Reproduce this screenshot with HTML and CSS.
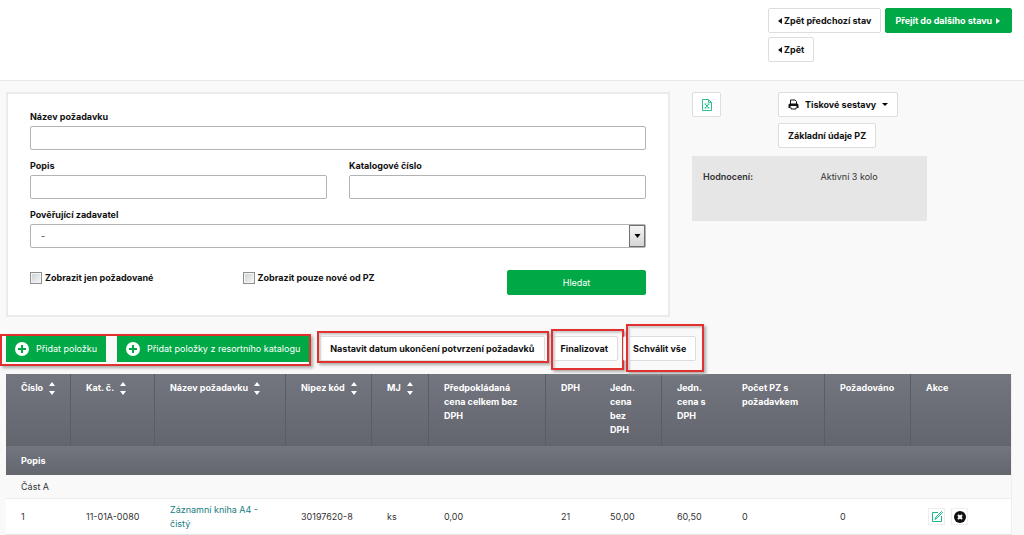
FILE: index.html
```html
<!DOCTYPE html>
<html lang="cs">
<head>
<meta charset="utf-8">
<title>Požadavky</title>
<link rel="stylesheet" href="styles.css">
</head>
<body>
<svg class="sprite" aria-hidden="true">
  <symbol id="sort" viewBox="0 0 6 13"><path d="M3 0 6 4H0zM0 9h6l-3 4z" fill="#fff"/></symbol>
  <symbol id="plus" viewBox="0 0 14 14"><circle cx="7" cy="7" r="7" fill="#fff"/><path d="M7 3v8M3 7h8" stroke="#00a846" stroke-width="2"/></symbol>
  <symbol id="left" viewBox="0 0 4 6"><path d="M4 0v6L0 3z" fill="currentColor"/></symbol>
  <symbol id="right" viewBox="0 0 4 6"><path d="M0 0v6l4-3z" fill="currentColor"/></symbol>
</svg>
<header class="topbar">
  <div class="topbar-actions">
    <button class="btn" type="button"><svg class="arrow"><use href="#left"/></svg>Zpět předchozí stav</button>
    <button class="btn btn-primary btn-next" type="button">Přejít do dalšího stavu<svg class="arrow"><use href="#right"/></svg></button>
    <button class="btn" type="button"><svg class="arrow"><use href="#left"/></svg>Zpět</button>
  </div>
</header>
<main>
  <div class="overview">
    <form class="filter">
      <div class="field wide"><label for="name">Název požadavku</label><input class="control" id="name" type="text"></div>
      <div class="field"><label for="desc">Popis</label><input class="control" id="desc" type="text"></div>
      <div class="field"><label for="catalog">Katalogové číslo</label><input class="control" id="catalog" type="text"></div>
      <div class="field wide"><label for="owner">Pověřující zadavatel</label>
        <div class="select-wrap"><select class="control" id="owner"><option>-</option></select><span class="select-button"><svg viewBox="0 0 6 4"><path d="M0 0h6L3 4z"/></svg></span></div>
      </div>
      <div class="filter-footer wide">
        <label class="check"><input type="checkbox">Zobrazit jen požadované</label>
        <label class="check"><input type="checkbox">Zobrazit pouze nové od PZ</label>
        <button class="btn btn-primary btn-search" type="submit">Hledat</button>
      </div>
    </form>
    <aside class="side">
      <div class="side-tools">
        <button class="btn btn-icon" type="button" aria-label="Export do Excelu">
          <svg width="12" height="12" viewBox="0 0 12 12" fill="none" stroke="#2fbd93"><path d="M1.500.5h6l3 3v8h-9z"/><path d="M7.500.5v3h3M4 5l4 4M8 5 4 9M3.500 5h2M6.500 5h2M3.500 9h2M6.500 9h2"/></svg>
        </button>
        <div class="side-buttons">
          <button class="btn btn-print" type="button">
            <svg width="11" height="11" viewBox="0 0 11 11"><path d="M2.500 5V1h4.500l1.500 1.500V5M3 8.500v1.500h5V8.500" fill="none" stroke="#111"/><path d="M2 4.500h7a1.500 1.500 0 0 1 1.500 1.500v3H8.500V7h-6v2h-2V6A1.500 1.500 0 0 1 2 4.500z" fill="#111"/></svg>
            Tiskové sestavy
            <svg width="6" height="3" viewBox="0 0 6 3"><path d="M0 0h6L3 3z"/></svg>
          </button>
          <button class="btn" type="button">Základní údaje PZ</button>
        </div>
      </div>
      <dl class="info"><dt>Hodnocení:</dt><dd>Aktivní 3 kolo</dd></dl>
    </aside>
  </div>
  <div class="toolbar">
    <div class="marked mark-add">
      <button class="btn btn-primary btn-add" type="button"><svg><use href="#plus"/></svg>Přidat položku</button>
      <button class="btn btn-primary btn-add" type="button"><svg><use href="#plus"/></svg>Přidat položky z resortního katalogu</button>
    </div>
    <div class="marked mark-date"><button class="btn" type="button">Nastavit datum ukončení potvrzení požadavků</button></div>
    <div class="marked mark-final"><button class="btn" type="button">Finalizovat</button></div>
    <div class="marked mark-approve"><button class="btn" type="button">Schválit vše</button></div>
  </div>
  <table class="items">
    <colgroup><col class="c-num"><col class="c-cat"><col class="c-name"><col class="c-nipez"><col class="c-unit"><col class="c-total"><col class="c-vat"><col class="c-net"><col class="c-gross"><col class="c-count"><col class="c-req"><col class="c-act"></colgroup>
    <thead>
      <tr>
        <th>Číslo<svg class="sort"><use href="#sort"/></svg></th>
        <th>Kat. č.<svg class="sort"><use href="#sort"/></svg></th>
        <th>Název požadavku<svg class="sort"><use href="#sort"/></svg></th>
        <th>Nipez kód<svg class="sort"><use href="#sort"/></svg></th>
        <th>MJ<svg class="sort"><use href="#sort"/></svg></th>
        <th>Předpokládaná cena celkem bez DPH</th>
        <th class="open">DPH</th>
        <th>Jedn.<br>cena<br>bez<br>DPH</th>
        <th class="open">Jedn.<br>cena s<br>DPH</th>
        <th>Počet PZ s požadavkem</th>
        <th>Požadováno</th>
        <th>Akce</th>
      </tr>
      <tr class="subhead"><th colspan="12">Popis</th></tr>
    </thead>
    <tbody>
      <tr class="group"><td colspan="12">Část A</td></tr>
      <tr class="item">
        <td>1</td><td>11-01A-0080</td><td><a href="#">Záznamní kniha A4 - čistý</a></td><td>30197620-8</td><td>ks</td><td>0,00</td><td>21</td><td>50,00</td><td>60,50</td><td>0</td><td>0</td>
        <td><div class="row-actions">
          <button type="button" aria-label="Upravit"><svg width="12" height="12" viewBox="0 0 12 12" fill="none" stroke="#1fb58a"><path d="M7 1.500H1.500v9h9V5"/><path d="M4 8.500 5 6l5.500-5.500 1 1L6 7z"/></svg></button>
          <button type="button" aria-label="Odstranit"><svg width="12" height="12" viewBox="0 0 12 12"><circle cx="6" cy="6" r="6" fill="#111"/><path d="m4 4 4 4M8 4 4 8" stroke="#fff" stroke-width="2"/></svg></button>
        </div></td>
      </tr>
    </tbody>
  </table>
</main>
</body>
</html>
```
FILE: styles.css
```css
* { box-sizing: border-box; }
body { margin: 0; background: #f9f9f9; color: #333; font: 9px/14px Inter, "Liberation Sans", sans-serif; }
button, input, select { font: inherit; color: inherit; }
.sprite { display: none; }

.btn { display: inline-flex; align-items: center; justify-content: center; gap: 2px; height: 25px; padding: 0 9px; border: 1px solid #ddd; border-radius: 2px; background: #fff; color: #111; font-weight: 700; white-space: nowrap; }
.btn-primary { border-color: #00a846; background: #00a846; color: #fff; }
.btn-next { padding: 0 11px 0 9px; gap: 4px; }
.arrow { width: 4px; height: 6px; }

.topbar { display: flex; justify-content: flex-end; height: 81px; padding: 8px 11px; border-bottom: 1px solid #e8e8e8; background: #fff; }
.topbar-actions { display: flex; flex-wrap: wrap; align-content: flex-start; gap: 4px; width: 245px; }

main { padding: 11px 12px 0 6px; }
.overview { display: grid; grid-template-columns: minmax(0, 664fr) minmax(0, 320fr); gap: 22px; align-items: start; }
.filter { display: grid; grid-template-columns: 1fr 1fr; gap: 9px 22px; padding: 16px 22px 20px; border: 2px solid #ebebeb; background: #fff; }
.wide { grid-column: 1 / -1; }
.field { display: grid; gap: 2px; }
.field label, .check { color: #111; font-weight: 700; }
.control { display: block; width: 100%; height: 24px; padding: 0 10px; border: 1px solid #b3b3b3; border-radius: 2px; background: #fff; }
.select-wrap { position: relative; }
select.control { appearance: none; }
.select-button { position: absolute; top: 1px; right: 1px; bottom: 1px; display: flex; align-items: center; justify-content: center; width: 16px; border: 1px solid #707070; background: linear-gradient(#f5f5f5, #d5d5d5); pointer-events: none; }
.select-button svg { width: 7px; height: 4px; }
.filter-footer { display: grid; grid-template-columns: 213fr 265fr 139px; align-items: start; padding-top: 13px; }
.check { display: flex; align-items: center; gap: 3px; padding-top: 1px; }
.check input { appearance: none; width: 12px; height: 12px; margin: 0; border: 1px solid #8e8f8f; background: linear-gradient(135deg, #cdd1d5, #f6f6f6); box-shadow: inset 0 0 0 1px #f4f4f4; }
.btn-search { font-weight: 400; }

.side { padding-right: 85px; }
.side-tools { display: grid; grid-template-columns: 86px auto; align-items: start; justify-content: start; }
.side-buttons { display: grid; gap: 6px; justify-items: start; }
.btn-icon { width: 29px; padding: 0; }
.btn-print { gap: 6px; }
.info { display: grid; grid-template-columns: 1fr 1fr; height: 65px; margin: 8px 0 0; padding: 14px 11px; background: #e6e6e6; }
.info dt { font-weight: 600; }
.info dd { margin: 0 0 0 11px; }

.toolbar { display: flex; align-items: flex-start; margin-top: 19px; }
.marked { position: relative; display: flex; gap: 11px; }
.marked::after { content: ""; position: absolute; border: 2px solid #e03030; box-shadow: 2px 2px 3px #aaa, inset 2px 2px 2px #ccc; pointer-events: none; }
.mark-add::after { inset: -2px -2px -4px -6px; box-shadow: 2px 2px 3px #aaa; }
.mark-date { margin-left: 10px; }
.mark-date .btn { padding: 0 10px; }
.mark-date::after { inset: -5px -4px -2px -2px; }
.mark-final { margin-left: 5px; }
.mark-final::after { inset: -7px -6px -9px 1px; }
.mark-approve { margin-left: 5px; }
.mark-approve::after { inset: -12px -8px -11px 3px; }
.btn-add { height: 26px; gap: 7px; padding: 0 8px; border-radius: 0; font-weight: 400; }
.btn-add svg { width: 14px; height: 14px; }

.items { width: 100%; margin-top: 12px; border-collapse: separate; border-spacing: 0; table-layout: fixed; border-right: 1px solid #eee; }
.items th, .items td { padding: 0 12px 0 15px; text-align: left; }
.items th { height: 72px; padding-top: 7px; border-right: 1px solid #5b5d66; border-bottom: 1px solid #62646c; background: linear-gradient(#73757f, #64666e); color: #fff; font-weight: 700; vertical-align: top; }
.items th.open, .items th:last-child { border-right: 0; }
.items .subhead th { height: 29px; padding-top: 0; border-bottom: 0; vertical-align: middle; }
.sort { width: 6px; height: 13px; margin-left: 6px; vertical-align: middle; }
.items .group td { height: 23px; }
.items .item td { height: 37px; border-top: 1px solid #eee; border-bottom: 1px solid #e5e5e5; background: #fff; }
.items a { color: #167d7d; text-decoration: none; }
.row-actions { display: flex; gap: 6px; padding-left: 2px; }
.row-actions button { display: flex; align-items: center; justify-content: center; width: 17px; height: 17px; padding: 0; border: 1px solid #eee; background: #fff; }
.c-num { width: 65px; }
.c-cat { width: 84px; }
.c-name { width: 131px; }
.c-nipez { width: 86px; }
.c-unit { width: 57px; }
.c-total { width: 117px; }
.c-vat { width: 49px; }
.c-net { width: 67px; }
.c-gross { width: 65px; }
.c-count { width: 98px; }
.c-req { width: 86px; }
.c-act { width: 100px; }
```
